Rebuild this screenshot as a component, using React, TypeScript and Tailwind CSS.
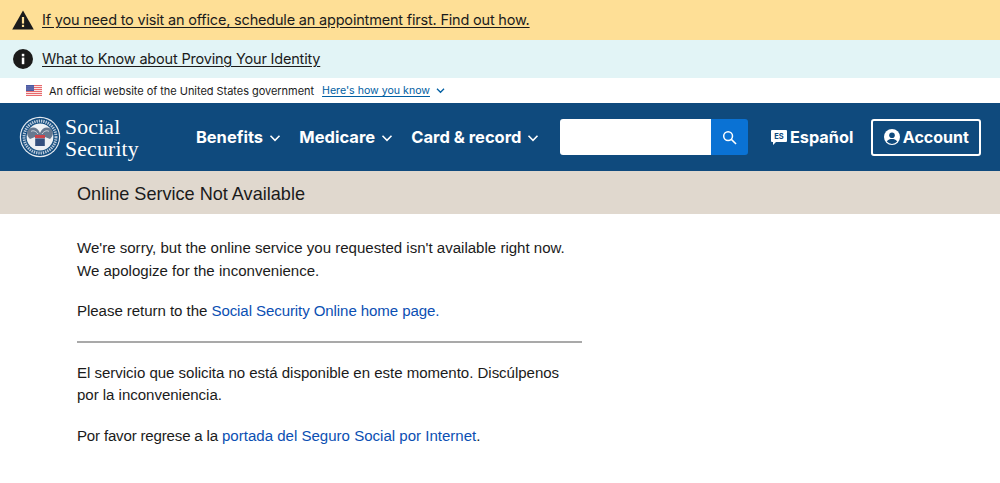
import React from "react";

const sans = "font-['Liberation_Sans',Arial,sans-serif]";
const head = "font-['Inter',Arial,sans-serif]";

function Chevron({ cls = "w-[14px] h-[14px]" }: { cls?: string }) {
  return (
    <svg viewBox="0 0 14 14" className={cls} fill="none" stroke="currentColor" strokeWidth="1.6">
      <path d="M2.5 4.8 7 9.3l4.5-4.5" />
    </svg>
  );
}

function NavItem({ label }: { label: string }) {
  return (
    <div className="flex items-center gap-[5px] text-white pt-[1px]">
      <span className="text-[16.5px] font-bold">{label}</span>
      <Chevron />
    </div>
  );
}

function Logo() {
  return (
    <svg viewBox="0 0 42 42" className="w-[42px] h-[42px]">
      <circle cx="21" cy="21" r="20.2" fill="#e4eaf1" />
      <circle cx="21" cy="21" r="19" fill="#0f4a7d" />
      <circle cx="21" cy="21" r="16" fill="none" stroke="#b9c8d9" strokeWidth="3" strokeDasharray="1.4 0.9" />
      <circle cx="21" cy="21" r="13.4" fill="#eef1f5" />
      <path d="M21 17 C18 10 11 10 8 16 C8 19 9 21 11 23 L16 21 L21 19 L26 21 L31 23 C33 21 34 19 34 16 C31 10 24 10 21 17Z" fill="#66788f" />
      <path d="M12 15.5 C14 14 17 15 19 18 M30 15.5 C28 14 25 15 23 18" fill="none" stroke="#eef1f5" strokeWidth="0.8" />
      <rect x="16" y="19" width="10" height="3.2" fill="#c9444a" />
      <rect x="16.2" y="22.4" width="9.6" height="7.6" fill="#34507f" />
    </svg>
  );
}

function Flag() {
  return (
    <svg viewBox="0 0 16 11" className="w-[16px] h-[11px]">
      <rect width="16" height="11" fill="#f9e3e3" />
      {[0, 2, 4, 6, 8, 10].map((y) => (
        <rect key={y} y={y} width="16" height="1" fill="#e8696d" />
      ))}
      <rect width="8" height="6" fill="#47559f" />
      {[1, 3, 5, 7].map((x) =>
        [1.2, 3, 4.8].map((y) => <circle key={x + "-" + y} cx={x} cy={y} r="0.4" fill="#d9def2" />)
      )}
    </svg>
  );
}

export default function App() {
  return (
    <div className={`w-[1000px] h-[483px] overflow-hidden bg-white text-[#1b1b1b] ${sans}`}>
      <div className={`h-[40px] bg-[#fedf96] flex items-center pl-[12px] gap-[8px] ${head}`}>
        <svg viewBox="0 0 22 20" className="w-[22px] h-[20px]">
          <path d="M11 .5 21.8 19.5H.2Z" fill="#1b1b1b" />
          <rect x="9.9" y="7" width="2.2" height="6.6" fill="#fedf96" />
          <rect x="9.9" y="14.8" width="2.2" height="2.2" fill="#fedf96" />
        </svg>
        <span className="text-[14.5px] tracking-[-0.19px] underline underline-offset-2">
          If you need to visit an office, schedule an appointment first. Find out how.
        </span>
      </div>
      <div className={`h-[38px] bg-[#e2f4f6] flex items-center pl-[13px] gap-[9px] ${head}`}>
        <svg viewBox="0 0 20 20" className="w-[20px] h-[20px]">
          <circle cx="10" cy="10" r="10" fill="#1b1b1b" />
          <rect x="8.8" y="8.6" width="2.5" height="6.6" fill="#fff" />
          <rect x="8.8" y="4.8" width="2.5" height="2.5" fill="#fff" />
        </svg>
        <span className="text-[14.5px] tracking-[-0.19px] underline underline-offset-2">What to Know about Proving Your Identity</span>
      </div>
      <div className={`h-[25px] bg-white flex items-center pl-[26px] ${head}`}>
        <Flag />
        <span className="ml-[7px] text-[11px] tracking-[-0.04px] pt-[1px]">An official website of the United States government</span>
        <span className="ml-[8px] text-[10.6px] text-[#005ea2] underline underline-offset-2 pt-[1px]">Here's how you know</span>
        <span className="ml-[5px] text-[#005ea2]">
          <Chevron cls="w-[11px] h-[11px]" />
        </span>
      </div>
      <div className={`h-[68px] bg-[#0f4a7d] flex items-center pl-[19px] ${head}`}>
        <Logo />
        <div className="ml-[4px] font-['Liberation_Serif',serif] text-white text-[21.7px] leading-[22px] tracking-[0.2px] pt-[1px]">
          <div>Social</div>
          <div>Security</div>
        </div>
        <div className="ml-[57px] flex items-center gap-[17.3px]">
          <NavItem label="Benefits" />
          <NavItem label="Medicare" />
          <NavItem label="Card & record" />
        </div>
        <div className="ml-[19.5px] flex h-[36px] w-[188px] rounded-[3px] overflow-hidden">
          <div className="flex-1 bg-white" />
          <div className="w-[37px] bg-[#0a72d4] flex items-center justify-center">
            <svg viewBox="0 0 16 16" className="w-[15px] h-[15px]" fill="none" stroke="#fff" strokeWidth="1.6">
              <circle cx="6.5" cy="6.5" r="4.7" />
              <path d="m10 10 5 5" />
            </svg>
          </div>
        </div>
        <div className="ml-[23px] flex items-center gap-[3px] text-white pt-[1px]">
          <svg viewBox="0 0 16 15" className="w-[16px] h-[15px]">
            <path d="M1 0h14a1 1 0 0 1 1 1v10a1 1 0 0 1-1 1H5l-3 3v-3H1a1 1 0 0 1-1-1V1a1 1 0 0 1 1-1Z" fill="#fff" />
            <text x="8" y="9" textAnchor="middle" fontSize="7.5" fontWeight="700" fill="#0f4a7d" fontFamily="Inter, sans-serif">ES</text>
          </svg>
          <span className="text-[16.3px] font-bold">Español</span>
        </div>
        <div className="ml-[18px] w-[110px] h-[37px] border-2 border-white rounded-[3px] flex items-center justify-center gap-[3px] text-white">
          <svg viewBox="0 0 16 16" className="w-[16px] h-[16px]">
            <circle cx="8" cy="8" r="8" fill="#fff" />
            <circle cx="8" cy="6.2" r="2.8" fill="#0f4a7d" />
            <path d="M2.8 12.6C4 10.6 6 10 8 10s4 .6 5.2 2.6A7 7 0 0 1 8 15a7 7 0 0 1-5.2-2.4Z" fill="#0f4a7d" />
          </svg>
          <span className="text-[16px] font-bold">Account</span>
        </div>
      </div>
      <div className="h-[43px] bg-[#e0d8ce] flex items-center pl-[77px] text-[18.1px] pt-[4px]">Online Service Not Available</div>
      <div className="pl-[77px] pt-[23px] w-[582px] text-[15.05px] leading-[22.5px]">
        <p>We're sorry, but the online service you requested isn't available right now.<br />We apologize for the inconvenience.</p>
        <p className="mt-[18px]">
          <span className="tracking-[-0.05px]">Please return to the </span><span className="text-[#0b4fb3] tracking-[-0.09px]">Social Security Online home page.</span>
        </p>
        <div className="mt-[18px] h-[2px] bg-[#a9a9a9]" />
        <p className="mt-[19px] tracking-[-0.03px]">
          El servicio que solicita no está disponible en este momento. Discúlpenos<br />por la inconveniencia.
        </p>
        <p className="mt-[18px]">
          <span className="tracking-[-0.17px]">Por favor regrese a la </span><span className="text-[#0b4fb3]">portada del Seguro Social por Internet</span>.
        </p>
      </div>
    </div>
  );
}
